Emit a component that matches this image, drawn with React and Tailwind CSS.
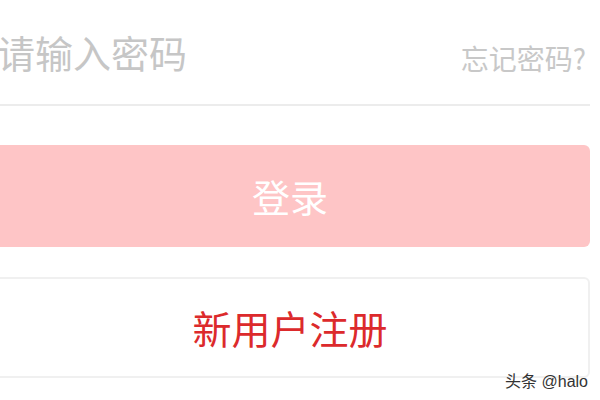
export default function App() {
  return (
    <div
      className="relative w-[600px] h-[400px] overflow-hidden bg-white"
      style={{ fontFamily: '"Noto Sans CJK SC", "Noto Sans", sans-serif' }}
    >
      <div className="ml-[-10px] w-[600px] flex flex-col">
        <div className="h-[106px] flex items-center justify-between border-b-2 border-[#ececec]">
          <span className="pl-[7px] text-[38px] leading-none text-[#c6c6c6]">请输入密码</span>
          <span className="pr-[4px] pt-[12px] text-[28px] leading-none text-[#c8c8c8]">忘记密码?</span>
        </div>
        <button className="mt-[39px] h-[102px] rounded-md bg-[#fec5c6] text-[38px] leading-none text-white">
          登录
        </button>
        <button className="mt-[30px] h-[101px] rounded-md border-2 border-[#f0f0f0] bg-white text-[39px] leading-none text-[#dc2a2c]">
          新用户注册
        </button>
      </div>
      <div
        className="absolute right-[12px] bottom-[10px] text-[16px] leading-none text-[#333]"
        style={{ fontFamily: '"Liberation Sans", "Noto Sans CJK SC", sans-serif' }}
      >
        头条 @halo
      </div>
    </div>
  );
}
